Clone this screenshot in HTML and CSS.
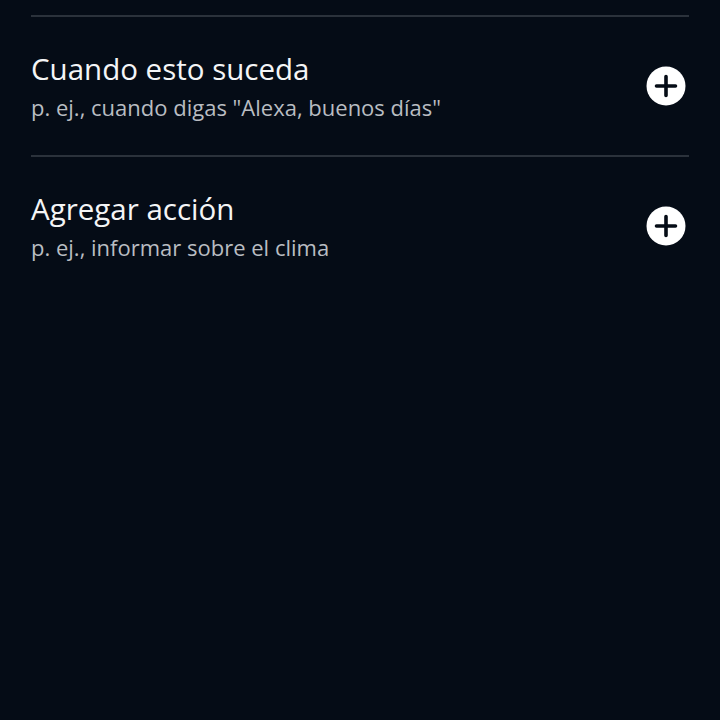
FILE: index.html
```html
<!DOCTYPE html>
<html lang="es">
<head>
<meta charset="utf-8">
<link rel="stylesheet" href="styles.css">
</head>
<body>
<main class="list">
  <div class="divider"></div>
  <div class="row">
    <div class="text">
      <div class="title">Cuando esto suceda</div>
      <div class="sub">p. ej., cuando digas "Alexa, buenos días"</div>
    </div>
    <button class="add" aria-label="Agregar">
      <svg viewBox="0 0 40 40" width="40" height="40"><circle cx="20" cy="20" r="19.5" fill="#fff"/><path d="M20 10.5v19M10.5 20h19" stroke="#050c16" stroke-width="3.6" stroke-linecap="round"/></svg>
    </button>
  </div>
  <div class="divider"></div>
  <div class="row">
    <div class="text">
      <div class="title">Agregar acción</div>
      <div class="sub">p. ej., informar sobre el clima</div>
    </div>
    <button class="add" aria-label="Agregar">
      <svg viewBox="0 0 40 40" width="40" height="40"><circle cx="20" cy="20" r="19.5" fill="#fff"/><path d="M20 10.5v19M10.5 20h19" stroke="#050c16" stroke-width="3.6" stroke-linecap="round"/></svg>
    </button>
  </div>
</main>
</body>
</html>
```
FILE: styles.css
```css
html, body {
  margin: 0;
  padding: 0;
  background: #050c16;
  height: 100%;
}
body {
  font-family: "Open Sans", "Noto Sans", sans-serif;
  color: #fff;
}
.list {
  padding: 15px 31px 0 31px;
}
.divider {
  height: 2px;
  background: #2b323b;
}
.row {
  display: flex;
  align-items: center;
  justify-content: space-between;
  height: 138px;
}
.text {
  display: flex;
  flex-direction: column;
  padding-top: 1px;
}
.title {
  font-size: 29.5px;
  line-height: 36px;
  color: #f4f5f6;
}
.sub {
  font-size: 22px;
  line-height: 30px;
  margin-top: 5px;
  color: #b9bdc2;
}
.add {
  background: none;
  border: 0;
  padding: 0;
  margin-right: 3px;
  width: 40px;
  height: 40px;
  display: block;
}
.add svg { display: block; }
```
